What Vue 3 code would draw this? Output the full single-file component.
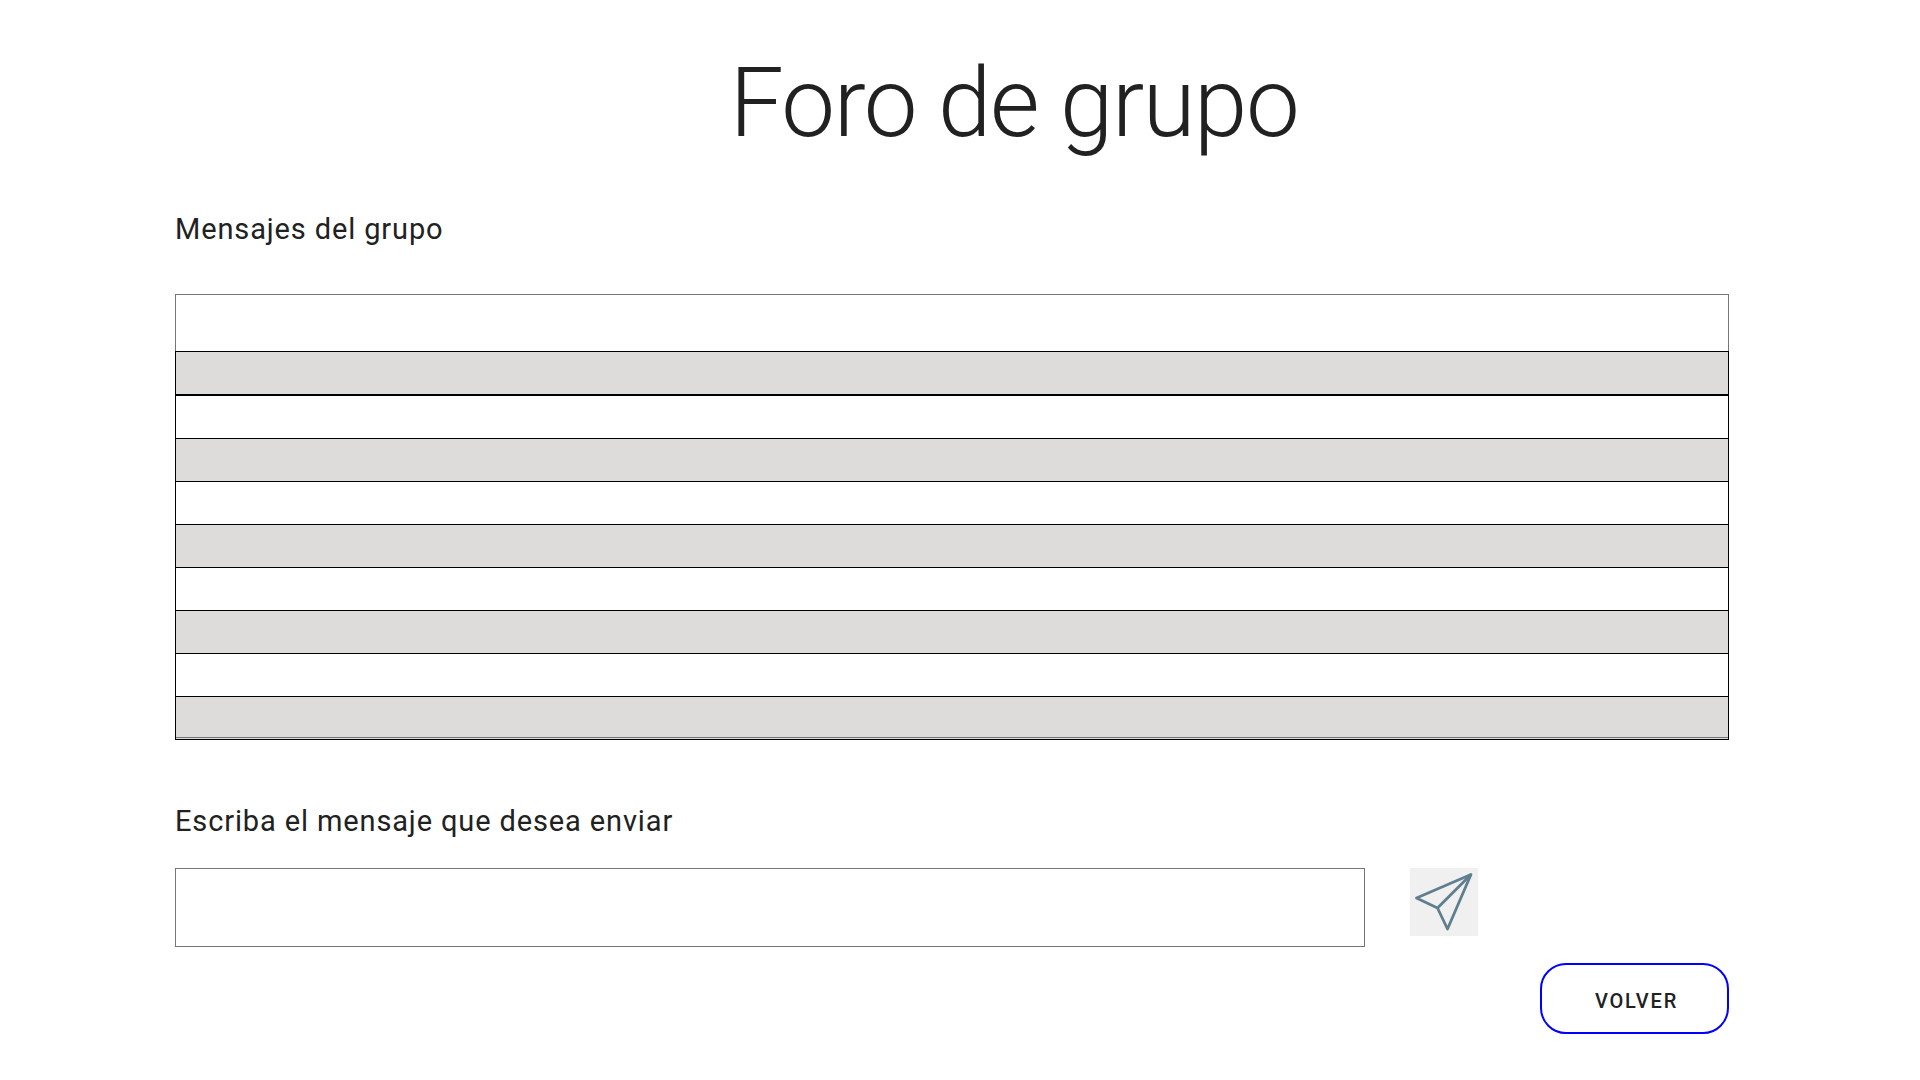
<script setup>
import { ref } from 'vue'

const rows = 9
const message = ref('')
</script>

<template>
  <main class="forum">
    <h1 class="title">Foro de grupo</h1>

    <h2 id="messages-label" class="label">Mensajes del grupo</h2>
    <div class="messages">
      <table class="grid" aria-labelledby="messages-label">
        <tbody>
          <tr v-for="n in rows" :key="n">
            <td></td>
          </tr>
        </tbody>
      </table>
    </div>

    <form @submit.prevent>
      <label class="label" for="message">Escriba el mensaje que desea enviar</label>
      <div class="compose">
        <input id="message" v-model="message" class="field" type="text" />
        <button class="send" type="submit" aria-label="Enviar">
          <svg viewBox="0 0 68 68" fill="none" stroke="#5f7f8e" stroke-width="2.8" stroke-linejoin="round" aria-hidden="true">
            <path d="M61 6.5 L6.5 30 L27.5 40 L37.5 61 Z" />
            <path d="M27.5 40 L61 6.5" />
          </svg>
        </button>
      </div>
    </form>

    <div class="actions">
      <button class="back" type="button">VOLVER</button>
    </div>
  </main>
</template>

<style>
body {
  margin: 0;
  background: #fff;
}
</style>

<style scoped>
.forum {
  padding: 55px 191px 40px 175px;
  color: #212121;
  font-family: Roboto, sans-serif;
}

.title {
  margin: 0;
  padding-left: 124px;
  font-size: 96px;
  font-weight: 300;
  line-height: 96px;
  letter-spacing: -0.015em;
  text-align: center;
}

.label {
  display: block;
  margin: 60px 0 0;
  font-size: 29px;
  font-weight: 400;
  line-height: 36px;
  letter-spacing: 0.03em;
}

.messages {
  height: 442px;
  margin: 47px 0 65px;
  border: 1px solid #757575;
}

.grid {
  width: calc(100% + 2px);
  margin: 56px -1px 0;
  border-spacing: 0;
}

.grid td {
  box-sizing: border-box;
  height: 43px;
  padding: 0;
  border: 1px solid #000;
  border-top: 0;
}

.grid tr:nth-child(-n + 2) td {
  height: 44px;
  border-top: 1px solid #000;
}

.grid tr:nth-child(odd) td {
  background: #dddcda;
}

.grid tr:last-child td {
  box-shadow: inset 0 -1px #dddcda, inset 0 -2px #757575;
}

.compose {
  display: flex;
  align-items: flex-start;
  gap: 45px;
  padding-right: 251px;
  margin-top: 29px;
}

.field {
  flex: 1;
  box-sizing: border-box;
  min-width: 0;
  height: 79px;
  padding: 0 16px;
  border: 1px solid #757575;
  background: #fff;
  color: inherit;
  font: inherit;
  font-size: 29px;
}

.send {
  width: 68px;
  height: 68px;
  padding: 0;
  border: 0;
  background: #f0f0f0;
  cursor: pointer;
}

.send svg {
  display: block;
  width: 68px;
  height: 68px;
}

.actions {
  display: flex;
  justify-content: flex-end;
  margin-top: 16px;
}

.back {
  width: 189px;
  height: 71px;
  padding: 4px 0 0 4px;
  border: 2px solid #00f;
  border-radius: 26px;
  background: #fff;
  color: #212121;
  font: 500 20px/24px Roboto, sans-serif;
  letter-spacing: 0.09em;
  cursor: pointer;
}
</style>
